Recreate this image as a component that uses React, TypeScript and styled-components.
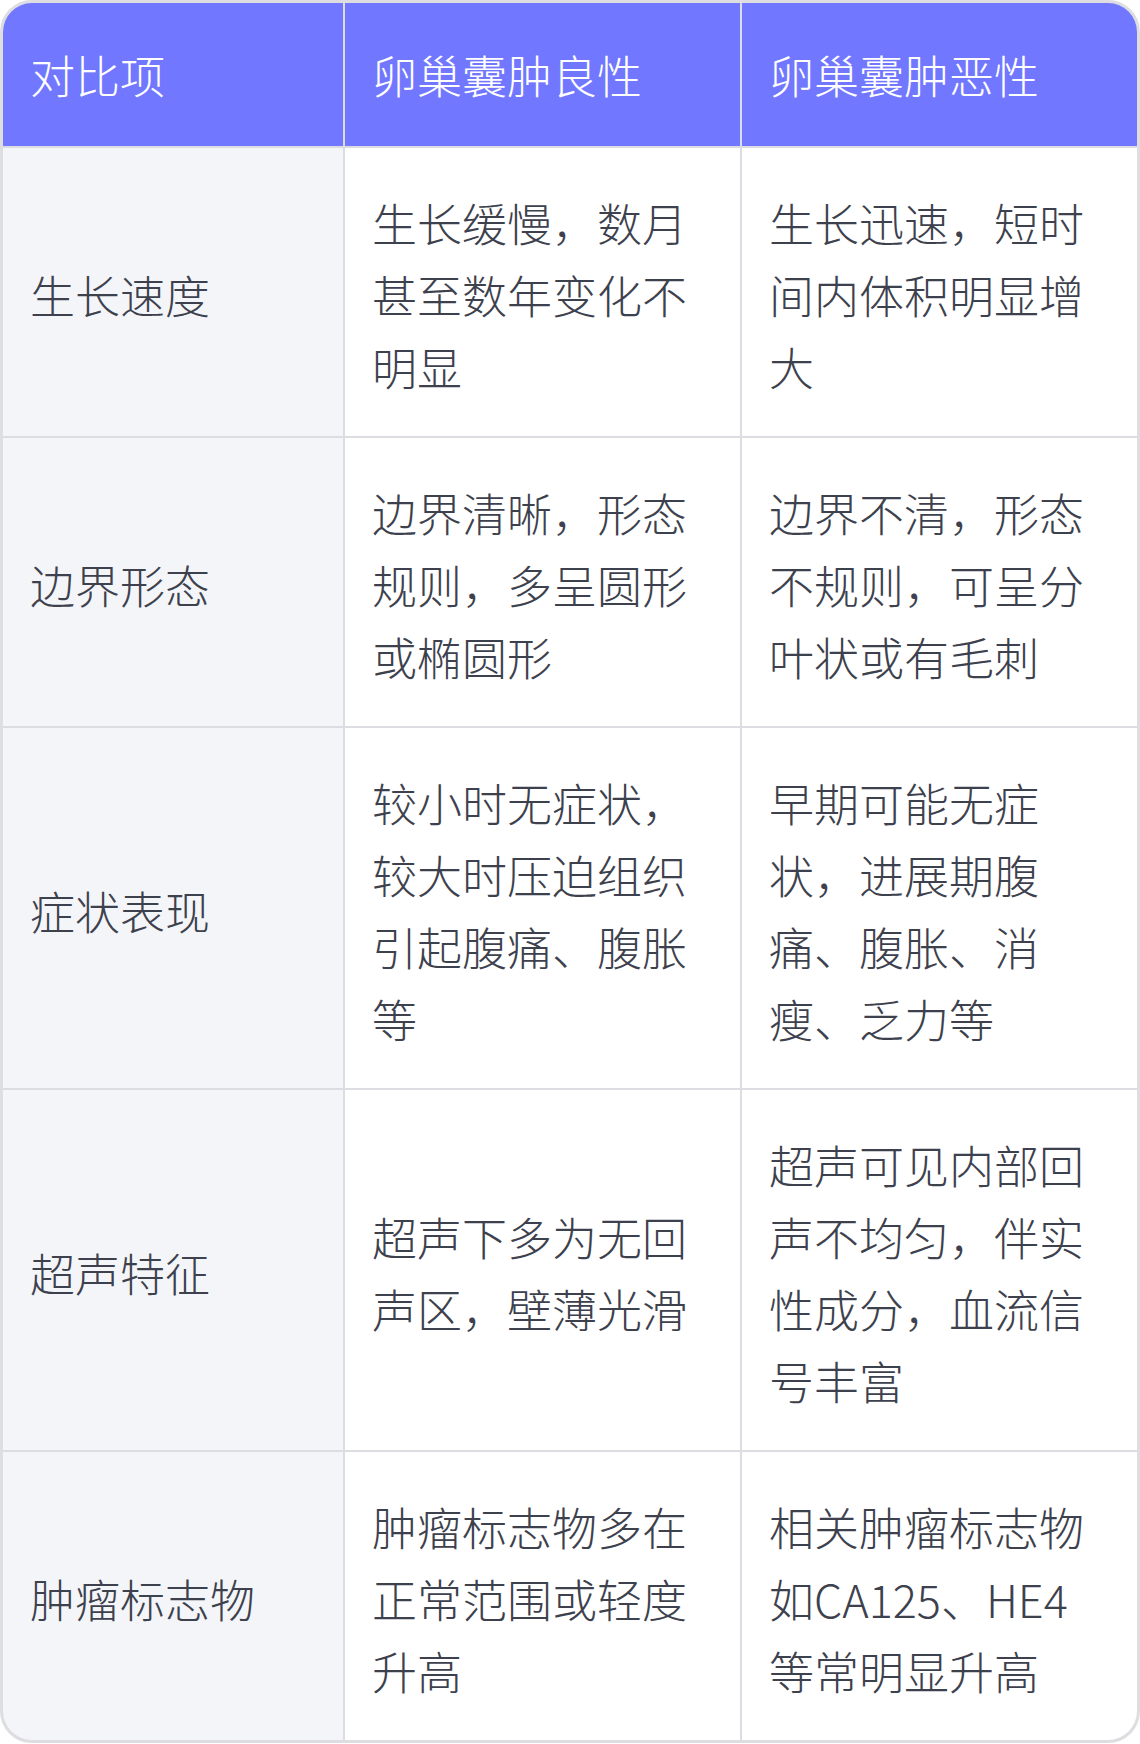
import React from 'react';
import styled, { createGlobalStyle } from 'styled-components';

const GlobalStyle = createGlobalStyle`
  html, body {
    margin: 0;
    padding: 0;
    background: #ffffff;
  }
  body {
    font-family: 'Noto Sans CJK SC', 'Noto Sans', sans-serif;
  }
`;

const columns = ['对比项', '卵巢囊肿良性', '卵巢囊肿恶性'];

const rows: string[][] = [
  ['生长速度', '生长缓慢，数月甚至数年变化不明显', '生长迅速，短时间内体积明显增大'],
  ['边界形态', '边界清晰，形态规则，多呈圆形或椭圆形', '边界不清，形态不规则，可呈分叶状或有毛刺'],
  ['症状表现', '较小时无症状，较大时压迫组织引起腹痛、腹胀等', '早期可能无症状，进展期腹痛、腹胀、消瘦、乏力等'],
  ['超声特征', '超声下多为无回声区，壁薄光滑', '超声可见内部回声不均匀，伴实性成分，血流信号丰富'],
  ['肿瘤标志物', '肿瘤标志物多在正常范围或轻度升高', '相关肿瘤标志物如CA125、HE4等常明显升高'],
];

const App: React.FC = () => {
  return (
    <>
      <GlobalStyle />
      <Table>
        {columns.map((c) => (
          <HeadCell key={c}>{c}</HeadCell>
        ))}
        {rows.map((r) =>
          r.map((text, i) => (
            <Cell key={r[0] + i} $label={i === 0}>
              {text}
            </Cell>
          ))
        )}
      </Table>
    </>
  );
};

// 表格外框
const Table = styled.div`
  display: grid;
  grid-template-columns: 340px 1fr 1fr;
  gap: 2px;
  width: 1140px;
  box-sizing: border-box;
  border: 3px solid #dedee2;
  border-radius: 32px;
  overflow: hidden;
  background: #dcdde2;
`;

const HeadCell = styled.div`
  background: #7177ff;
  color: #ffffff;
  font-size: 45px;
  font-weight: 300;
  line-height: 72px;
  padding: 36px 26px 35px 27px;
`;

// 第一列是浅灰底
const Cell = styled.div<{ $label?: boolean }>`
  display: flex;
  align-items: center;
  background: ${(p) => (p.$label ? '#f4f5f9' : '#ffffff')};
  color: #3d414d;
  font-size: 45px;
  font-weight: 300;
  line-height: 72px;
  padding: 39px 26px 33px 27px;
  word-break: break-all;
`;

export default App;
